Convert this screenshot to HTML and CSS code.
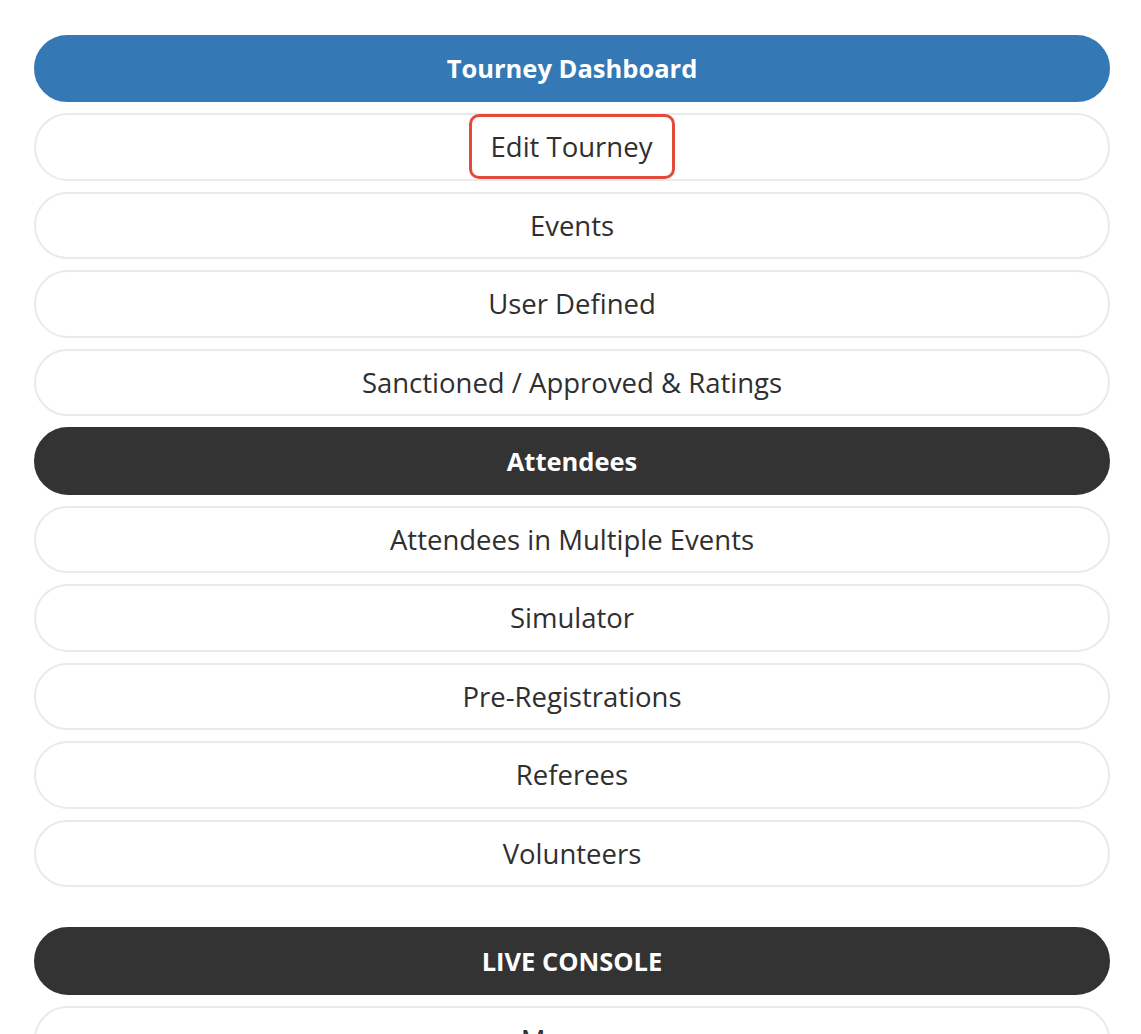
FILE: index.html
```html
<!DOCTYPE html>
<html>
<head>
<meta charset="utf-8">
<link rel="stylesheet" href="styles.css">
</head>
<body>
<nav class="menu">
  <div class="group">
    <a class="btn btn-primary">Tourney Dashboard</a>
    <a class="btn btn-light"><span class="highlight">Edit Tourney</span></a>
    <a class="btn btn-light">Events</a>
    <a class="btn btn-light">User Defined</a>
    <a class="btn btn-light">Sanctioned / Approved &amp; Ratings</a>
    <a class="btn btn-dark">Attendees</a>
    <a class="btn btn-light">Attendees in Multiple Events</a>
    <a class="btn btn-light">Simulator</a>
    <a class="btn btn-light">Pre-Registrations</a>
    <a class="btn btn-light">Referees</a>
    <a class="btn btn-light">Volunteers</a>
  </div>
  <div class="group">
    <a class="btn btn-dark btn-caps">LIVE CONSOLE</a>
    <a class="btn btn-light">Manage</a>
  </div>
</nav>
</body>
</html>
```
FILE: styles.css
```css
html, body {
  margin: 0;
  padding: 0;
  background: #ffffff;
}
body {
  font-family: "Open Sans", "Noto Sans", sans-serif;
  color: #333333;
  overflow: hidden;
  height: 1034px;
}
.menu {
  padding: 34.5px 31px 0 34px;
  display: flex;
  flex-direction: column;
  gap: 40px;
}
.group {
  display: flex;
  flex-direction: column;
  gap: 11px;
}
.btn {
  box-sizing: border-box;
  height: 67.5px;
  border-radius: 34px;
  display: flex;
  align-items: center;
  justify-content: center;
  font-size: 27.5px;
  font-weight: 400;
  color: #2f2f2f;
  text-decoration: none;
  border: 2px solid #e9eaeb;
  background: #ffffff;
}
.btn-primary {
  background: #3479b6;
  border-color: #3479b6;
  color: #ffffff;
  font-weight: 700;
  font-size: 25.5px;
}
.btn-dark {
  background: #333333;
  border-color: #333333;
  color: #ffffff;
  font-weight: 700;
  font-size: 25.5px;
}
.highlight {
  display: inline-flex;
  align-items: center;
  box-sizing: border-box;
  height: 65px;
  padding: 0 20px 0 19px;
  border: 3px solid #e24b3b;
  border-radius: 10px;
}
```
